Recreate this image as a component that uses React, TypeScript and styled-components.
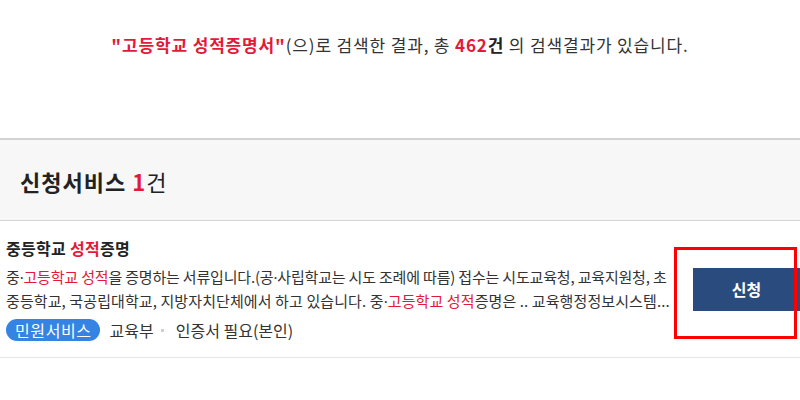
import React from "react";
import styled, { createGlobalStyle } from "styled-components";

const Global = createGlobalStyle`
  html, body { margin: 0; padding: 0; background: #fff; }
  body {
    font-family: "Noto Sans CJK KR", "Noto Sans", sans-serif;
    color: #222;
    width: 800px;
    overflow: hidden;
  }
`;

const Summary = styled.p`
  margin: 0;
  height: 138px;
  padding-top: 33px;
  box-sizing: border-box;
  text-align: center;
  font-size: 17px;
  line-height: 24px;
  color: #333;
  letter-spacing: 0.85px;
`;

const Hl = styled.span<{ $bold?: boolean }>`
  color: #e3193a;
  font-weight: ${(p) => (p.$bold ? 700 : 400)};
`;

const Strong = styled.b`
  color: #222;
  font-weight: 700;
`;

const Section = styled.section`
  border-top: 2px solid #d2d2d2;
`;

const SectionHeader = styled.div`
  height: 81px;
  background: #f7f7f7;
  border-bottom: 1px solid #d4d4d4;
  display: flex;
  align-items: center;
  padding-left: 20px;
  padding-top: 2px;
  box-sizing: border-box;
`;

const SectionTitle = styled.h2`
  margin: 0;
  font-size: 22px;
  line-height: 28px;
  font-weight: 700;
  color: #222;
  letter-spacing: 1px;
`;

const Count = styled.span`
  color: #e3193a;
  font-weight: 700;
`;

const Unit = styled.span`
  font-weight: 400;
`;

const Item = styled.div`
  display: flex;
  align-items: center;
  border-bottom: 1px solid #e4e4e4;
`;

const Content = styled.div`
  width: 676px;
  padding: 15px 0 16px 6px;
  box-sizing: border-box;
  overflow: hidden;
`;

const ItemTitle = styled.h3`
  margin: 0;
  font-size: 16px;
  line-height: 24px;
  font-weight: 700;
  color: #222;
  letter-spacing: 0.3px;
`;

const Desc = styled.div`
  margin-top: 5px;
  font-size: 15px;
  line-height: 24px;
  color: #333;
`;

const DescLine = styled.div<{ $spacing: number }>`
  white-space: nowrap;
  overflow: hidden;
  letter-spacing: ${(p) => p.$spacing}px;
`;

const Dot = styled.span`
  font-family: "Noto Sans", "DejaVu Sans", sans-serif;
`;

const Mark = styled.span`
  color: #e3193a;
`;

const Meta = styled.div`
  margin-top: 6px;
  display: flex;
  align-items: center;
  font-size: 16px;
  line-height: 22px;
  color: #333;
  letter-spacing: 0;
`;

const Tag = styled.span`
  display: inline-flex;
  align-items: center;
  height: 22px;
  padding: 0 8px 0 9px;
  border-radius: 11px;
  background: #3584e4;
  color: #fff;
  letter-spacing: 0.6px;
  margin-right: 10px;
`;

const Sep = styled.span`
  width: 3px;
  height: 3px;
  background: #d0d0d0;
  margin: 0 12px 0 7px;
`;

const ActionCell = styled.div`
  position: relative;
  flex: 1;
  align-self: stretch;
  display: flex;
  align-items: center;
  padding-left: 17px;
`;

const ApplyButton = styled.button`
  width: 107px;
  height: 43px;
  flex-shrink: 0;
  border: none;
  background: #2a4b7e;
  color: #fff;
  font-family: inherit;
  font-size: 16px;
  font-weight: 700;
  cursor: pointer;
`;

const Highlight = styled.div`
  position: absolute;
  left: -2px;
  top: 26px;
  width: 123px;
  height: 92px;
  border: 3px solid #ff0000;
  box-sizing: border-box;
  pointer-events: none;
`;

export default function App() {
  return (
    <>
      <Global />
      <Summary>
        <Hl $bold>"고등학교 성적증명서"</Hl>(으)로 검색한 결과, 총 <Hl $bold>462</Hl>
        <Strong>건</Strong> 의 검색결과가 있습니다.
      </Summary>
      <Section>
        <SectionHeader>
          <SectionTitle>
            신청서비스 <Count>1</Count>
            <Unit>건</Unit>
          </SectionTitle>
        </SectionHeader>
        <Item>
          <Content>
            <ItemTitle>
              중등학교 <Mark>성적</Mark>증명
            </ItemTitle>
            <Desc>
              <DescLine $spacing={-0.18}>
                중<Dot>·</Dot>
                <Mark>고등학교 성적</Mark>을 증명하는 서류입니다.(공<Dot>·</Dot>사립학교는 시도 조례에 따름) 접수는
                시도교육청, 교육지원청, 초
              </DescLine>
              <DescLine $spacing={0.1}>
                중등학교, 국공립대학교, 지방자치단체에서 하고 있습니다. 중<Dot>·</Dot>
                <Mark>고등학교 성적</Mark>증명은 .. 교육행정정보시스템...
              </DescLine>
            </Desc>
            <Meta>
              <Tag>민원서비스</Tag>
              교육부
              <Sep />
              인증서 필요(본인)
            </Meta>
          </Content>
          <ActionCell>
            <ApplyButton>신청</ApplyButton>
            <Highlight />
          </ActionCell>
        </Item>
      </Section>
    </>
  );
}
